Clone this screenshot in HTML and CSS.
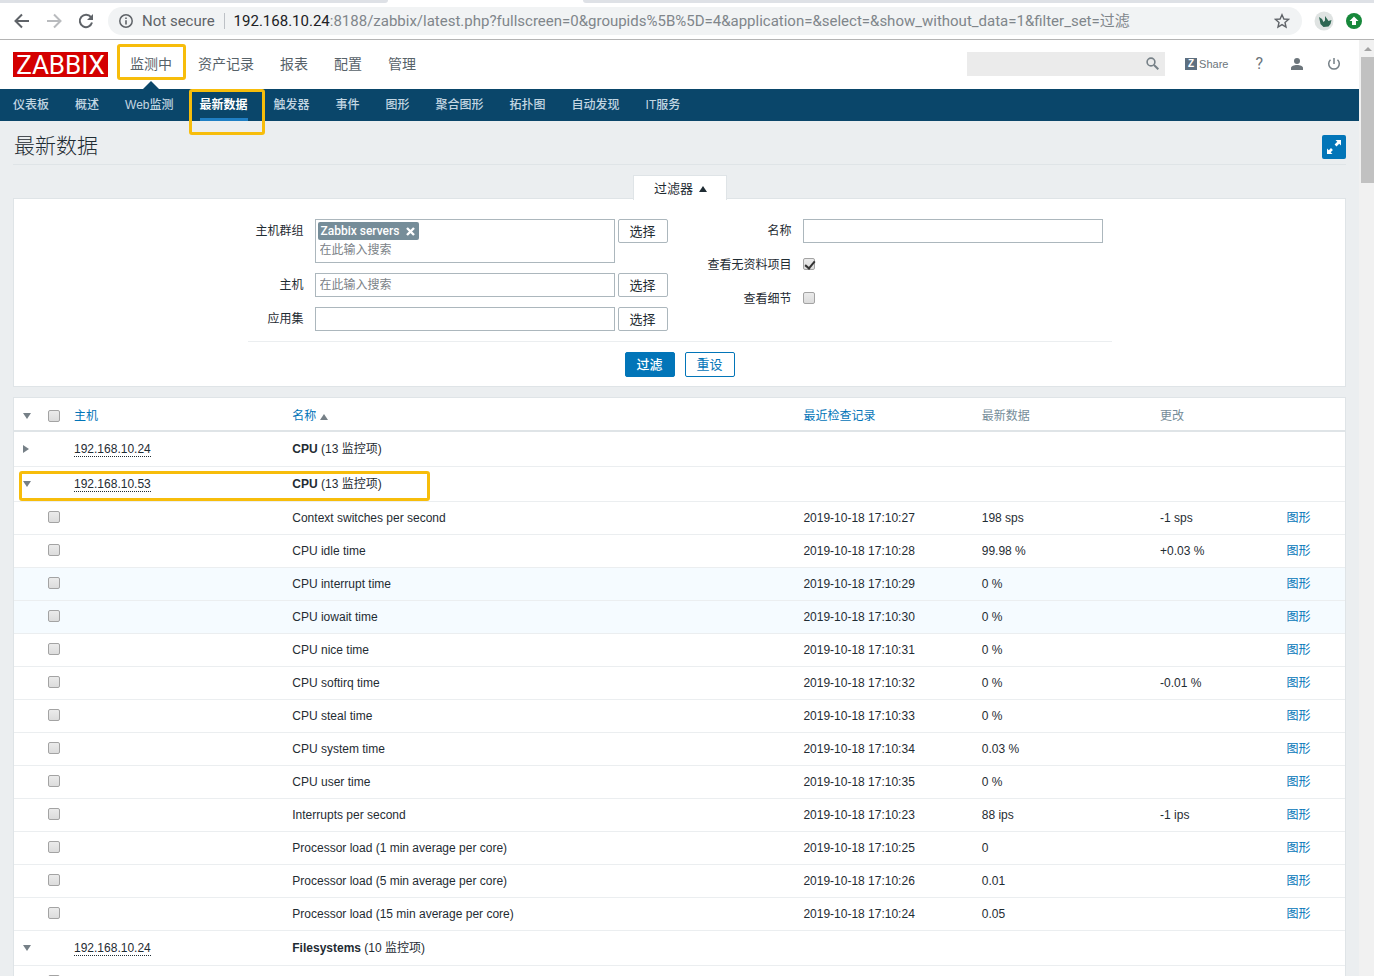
FILE: index.html
```html
<!DOCTYPE html>
<html lang="zh-CN">
<head>
<meta charset="utf-8">
<title>最新数据</title>
<link rel="stylesheet" href="styles.css">
</head>
<body>
<div class="browser">
  <div class="tabstrip"><span class="tab-inactive tab-left"></span><span class="tab-inactive tab-right"></span></div>
  <div class="toolbar">
    <button class="tool" aria-label="Back"><svg width="16" height="16" viewBox="0 0 16 16" fill="none" stroke="#5f6368" stroke-width="2"><path d="M15 8H2M8 1.5L1.5 8L8 14.5"/></svg></button>
    <button class="tool" aria-label="Forward"><svg width="16" height="16" viewBox="0 0 16 16" fill="none" stroke="#b9bbbe" stroke-width="2"><path d="M1 8h13M8 1.5L14.500 8L8 14.500"/></svg></button>
    <button class="tool" aria-label="Reload"><svg width="16" height="16" viewBox="0 0 16 16" fill="none" stroke="#5f6368" stroke-width="2"><path d="M13 4.200A6.200 6.200 0 1 0 14 9.600"/><path d="M15 1v6H9z" fill="#5f6368" stroke="none"/></svg></button>
    <div class="address">
      <svg width="14" height="14" viewBox="0 0 14 14" fill="none" stroke="#5f6368"><circle cx="7" cy="7" r="6.200" stroke-width="1.500"/><path d="M7 6.200V10.500M7 3.500V5" stroke-width="1.600"/></svg>
      <span class="insecure">Not secure</span>
      <span class="divider"></span>
      <span class="url"><span class="domain">192.168.10.24</span>:8188/zabbix/latest.php?fullscreen=0&amp;groupids%5B%5D=4&amp;application=&amp;select=&amp;show_without_data=1&amp;filter_set=过滤</span>
      <svg class="star" width="16" height="16" viewBox="0 0 16 16" fill="none" stroke="#5f6368" stroke-width="1.400"><path d="M8 1.800L9.900 6L14.500 6.400L11 9.500L12 14L8 11.600L4 14L5 9.500L1.500 6.400L6.100 6Z"/></svg>
    </div>
    <svg width="20" height="20" viewBox="0 0 20 20"><circle cx="10" cy="10" r="9.500" fill="#dfe3e2"/><path d="M5 6l3 2 1.500 3 1.500-1.500V5l2.500 3.500 1 1.500 3-1-1 4-2 2.500-5 .5-3-3z" fill="#2d6652"/></svg>
    <svg width="16" height="16" viewBox="0 0 16 16"><circle cx="8" cy="8" r="8" fill="#17883b"/><path d="M8 3.500L12.500 8H10v4H6V8H3.500z" fill="#fff"/></svg>
  </div>
</div>

<div class="viewport">
  <div class="page">
    <header class="header">
      <a class="logo" href="#">ZABBIX</a>
      <nav class="mainnav">
        <a class="current" href="#">监测中<span class="mark mark-main"></span></a>
        <a href="#">资产记录</a>
        <a href="#">报表</a>
        <a href="#">配置</a>
        <a href="#">管理</a>
      </nav>
      <div class="usernav">
        <div class="search">
          <input type="text" aria-label="搜索">
          <button aria-label="搜索"><svg width="13" height="13" viewBox="0 0 13 13" fill="none" stroke="#768087"><circle cx="5" cy="5" r="3.900" stroke-width="1.600"/><path d="M8 8L12.300 12.300" stroke-width="2"/></svg></button>
        </div>
        <a class="share" href="#"><span class="z">Z</span>Share</a>
        <a class="help" href="#">?</a>
        <a href="#" aria-label="用户"><svg width="12" height="12" viewBox="0 0 12 12" fill="#6c757b"><circle cx="6" cy="3" r="3"/><path d="M0 12V10C0 8 3 7 6 7s6 1 6 3v2z"/></svg></a>
        <a href="#" aria-label="退出"><svg width="14" height="14" viewBox="0 0 14 14" fill="none" stroke="#768087" stroke-width="1.500"><path d="M7 1V7M3.500 2.800A5.300 5.300 0 1 0 10.500 2.800"/></svg></a>
      </div>
    </header>
    <nav class="subnav">
      <a href="#">仪表板</a>
      <a href="#">概述</a>
      <a href="#">Web监测</a>
      <a class="current" href="#">最新数据<span class="mark mark-sub"></span></a>
      <a href="#">触发器</a>
      <a href="#">事件</a>
      <a href="#">图形</a>
      <a href="#">聚合图形</a>
      <a href="#">拓扑图</a>
      <a href="#">自动发现</a>
      <a href="#">IT服务</a>
    </nav>

    <main class="content">
      <div class="titlebar">
        <h1>最新数据</h1>
        <button class="fullscreen" aria-label="全屏"><svg width="16" height="16" viewBox="0 0 16 16" fill="#fff"><path d="M9.500 1H15V6.500L13.200 4.700L10.500 7.400L8.600 5.500L11.300 2.800z"/><path d="M6.500 15H1V9.500L2.800 11.300L5 9.100L6.900 11L4.700 13.200z"/></svg></button>
      </div>

      <button class="filter-tab">过滤器 <svg width="8" height="6" viewBox="0 0 8 6" fill="#1f2c33"><path d="M0 6L4 0L8 6z"/></svg></button>
      <form class="filter">
        <div class="filter-body">
          <div class="fields fields-left">
            <label for="groups">主机群组</label>
            <div class="control">
              <div class="multi">
                <span class="tag">Zabbix servers <button type="button" aria-label="移除"><svg width="9" height="9" viewBox="0 0 9 9" stroke="#fff" stroke-width="2.400"><path d="M1 1L8 8M8 1L1 8"/></svg></button></span>
                <input id="groups" type="text" placeholder="在此输入搜索">
              </div>
              <button type="button" class="select">选择</button>
            </div>
            <label for="hosts">主机</label>
            <div class="control"><input id="hosts" class="box" type="text" placeholder="在此输入搜索"><button type="button" class="select">选择</button></div>
            <label for="app">应用集</label>
            <div class="control"><input id="app" class="box" type="text"><button type="button" class="select">选择</button></div>
          </div>
          <div class="fields fields-right">
            <label for="name">名称</label>
            <input id="name" class="box" type="text">
            <label for="nodata">查看无资料项目</label>
            <div class="check-line"><input id="nodata" type="checkbox" checked></div>
            <label for="details">查看细节</label>
            <div class="check-line"><input id="details" type="checkbox"></div>
          </div>
        </div>
        <div class="actions">
          <button type="button" class="primary">过滤</button>
          <button type="button" class="secondary">重设</button>
        </div>
      </form>

      <table class="list">
        <colgroup><col class="c-arrow"><col class="c-check"><col class="c-host"><col class="c-name"><col class="c-data"><col class="c-data"><col class="c-change"><col></colgroup>
        <thead>
          <tr>
            <th><span class="arrow down"></span></th>
            <th><input type="checkbox" aria-label="全选"></th>
            <th><a href="#">主机</a></th>
            <th><a href="#">名称 <span class="arrow up"></span></a></th>
            <th><a href="#">最近检查记录</a></th>
            <th>最新数据</th>
            <th>更改</th>
            <th></th>
          </tr>
        </thead>
        <tbody>
          <tr class="group"><td><span class="arrow right"></span></td><td></td><td><a class="host" href="#">192.168.10.24</a></td><td colspan="5"><b>CPU</b> (13 监控项)</td></tr>
          <tr class="group"><td class="marked"><span class="arrow down"></span><span class="mark mark-row"></span></td><td></td><td><a class="host" href="#">192.168.10.53</a></td><td colspan="5"><b>CPU</b> (13 监控项)</td></tr>
          <tr><td></td><td><input type="checkbox" aria-label="选择"></td><td></td><td>Context switches per second</td><td>2019-10-18 17:10:27</td><td>198 sps</td><td>-1 sps</td><td><a href="#">图形</a></td></tr>
          <tr><td></td><td><input type="checkbox" aria-label="选择"></td><td></td><td>CPU idle time</td><td>2019-10-18 17:10:28</td><td>99.98 %</td><td>+0.03 %</td><td><a href="#">图形</a></td></tr>
          <tr class="tint"><td></td><td><input type="checkbox" aria-label="选择"></td><td></td><td>CPU interrupt time</td><td>2019-10-18 17:10:29</td><td>0 %</td><td></td><td><a href="#">图形</a></td></tr>
          <tr class="tint"><td></td><td><input type="checkbox" aria-label="选择"></td><td></td><td>CPU iowait time</td><td>2019-10-18 17:10:30</td><td>0 %</td><td></td><td><a href="#">图形</a></td></tr>
          <tr><td></td><td><input type="checkbox" aria-label="选择"></td><td></td><td>CPU nice time</td><td>2019-10-18 17:10:31</td><td>0 %</td><td></td><td><a href="#">图形</a></td></tr>
          <tr><td></td><td><input type="checkbox" aria-label="选择"></td><td></td><td>CPU softirq time</td><td>2019-10-18 17:10:32</td><td>0 %</td><td>-0.01 %</td><td><a href="#">图形</a></td></tr>
          <tr><td></td><td><input type="checkbox" aria-label="选择"></td><td></td><td>CPU steal time</td><td>2019-10-18 17:10:33</td><td>0 %</td><td></td><td><a href="#">图形</a></td></tr>
          <tr><td></td><td><input type="checkbox" aria-label="选择"></td><td></td><td>CPU system time</td><td>2019-10-18 17:10:34</td><td>0.03 %</td><td></td><td><a href="#">图形</a></td></tr>
          <tr><td></td><td><input type="checkbox" aria-label="选择"></td><td></td><td>CPU user time</td><td>2019-10-18 17:10:35</td><td>0 %</td><td></td><td><a href="#">图形</a></td></tr>
          <tr><td></td><td><input type="checkbox" aria-label="选择"></td><td></td><td>Interrupts per second</td><td>2019-10-18 17:10:23</td><td>88 ips</td><td>-1 ips</td><td><a href="#">图形</a></td></tr>
          <tr><td></td><td><input type="checkbox" aria-label="选择"></td><td></td><td>Processor load (1 min average per core)</td><td>2019-10-18 17:10:25</td><td>0</td><td></td><td><a href="#">图形</a></td></tr>
          <tr><td></td><td><input type="checkbox" aria-label="选择"></td><td></td><td>Processor load (5 min average per core)</td><td>2019-10-18 17:10:26</td><td>0.01</td><td></td><td><a href="#">图形</a></td></tr>
          <tr><td></td><td><input type="checkbox" aria-label="选择"></td><td></td><td>Processor load (15 min average per core)</td><td>2019-10-18 17:10:24</td><td>0.05</td><td></td><td><a href="#">图形</a></td></tr>
          <tr class="group"><td><span class="arrow down"></span></td><td></td><td><a class="host" href="#">192.168.10.24</a></td><td colspan="5"><b>Filesystems</b> (10 监控项)</td></tr>
          <tr><td></td><td><input type="checkbox" aria-label="选择"></td><td></td><td></td><td></td><td></td><td></td><td></td></tr>
        </tbody>
      </table>
    </main>
  </div>
  <div class="scrollbar"><span class="scroll-up"></span><span class="thumb"></span></div>
</div>
</body>
</html>
```
FILE: styles.css
```css
* { box-sizing: border-box; }
body {
  margin: 0;
  height: 100vh;
  display: flex;
  flex-direction: column;
  overflow: hidden;
  background: #ebeef0;
  color: #1f2c33;
  font: 12px/18px "Liberation Sans", "Noto Sans CJK SC", sans-serif;
}
a { color: #0275b8; text-decoration: none; }
button, input { font: inherit; color: inherit; margin: 0; padding: 0; border-radius: 0; }
button { background: none; border: 0; }
svg { display: block; flex: none; }

/* Browser bar */
.browser { flex: none; background: #fff; border-bottom: 1px solid #b4b4b4; }
.tabstrip { display: flex; justify-content: space-between; height: 3px; }
.tab-inactive { background: #dee1e6; }
.tab-left { width: 388px; border-bottom-right-radius: 4px; }
.tab-right { flex: 1; margin-left: 195px; border-bottom-left-radius: 4px; }
.toolbar { display: flex; align-items: center; gap: 12px; height: 36px; padding: 0 12px 0 14px; }
.tool { width: 16px; margin-right: 4px; }
.address {
  flex: 1;
  display: flex;
  align-items: center;
  height: 28px;
  margin-left: -2px;
  padding: 0 12px 0 11px;
  border-radius: 14px;
  background: #f1f3f4;
  color: #5f6368;
  font: 15px/20px Roboto, "Noto Sans CJK SC", sans-serif;
  white-space: nowrap;
}
.insecure { margin-left: 9px; }
.divider { width: 1px; height: 16px; margin: 0 9px; background: #bdc1c6; }
.url { flex: 1; color: #80868b; }
.domain { color: #202124; }

/* Page frame */
.viewport { flex: 1; min-height: 0; display: flex; }
.page { flex: 1; min-width: 0; overflow: hidden; }
.scrollbar { width: 15px; padding-left: 2px; background: #f1f1f1; display: flex; flex-direction: column; }
.scroll-up { height: 17px; flex: none; display: flex; align-items: center; justify-content: center; }
.scroll-up::before { content: ""; border: 4px solid transparent; border-top: 0; border-bottom: 4px solid #a3a3a3; }
.thumb { height: 126px; background: #c1c1c1; }

/* Header */
.header { display: flex; align-items: center; height: 49px; padding: 0 18px 0 13px; background: #fff; }
.logo { width: 95px; height: 25px; background: #d40000; color: #fff; font: 26px/26px Roboto, sans-serif; text-align: center; }
.mainnav { display: flex; gap: 26px; margin-left: 22px; font-size: 14px; line-height: 49px; }
.mainnav a { position: relative; color: #576269; }
.mainnav .current::after {
  content: "";
  position: absolute;
  left: 50%;
  bottom: 0;
  margin-left: -8px;
  border: 8px solid transparent;
  border-top: 0;
  border-bottom-color: #0a466a;
}
.usernav { display: flex; align-items: center; margin-left: auto; padding-bottom: 2px; gap: 24px; color: #768087; }
.usernav a { color: #6c757b; }
.search { display: flex; align-items: center; width: 198px; height: 24px; padding-right: 6px; background: #ebebeb; margin-right: -4px; }
.search input { flex: 1; min-width: 0; height: 24px; border: 0; background: none; }
.share { display: flex; align-items: center; gap: 2px; font: 11px/18px "Liberation Sans", sans-serif; margin-right: 3px; }
.z { width: 12px; height: 12px; background: #5d6f80; color: #fff; font: bold 10px/12px "Liberation Sans", sans-serif; text-align: center; }
.help { font: 16px/18px Roboto, sans-serif; margin-right: 4px; }
.subnav { display: flex; gap: 26px; height: 32px; padding: 0 13px; background: #0a466a; line-height: 33px; font-weight: 500; }
.subnav a { position: relative; height: 32px; color: #c3d6e2; }
.subnav .current { color: #fff; font-weight: bold; border-bottom: 3px solid #1f7fc4; }

/* Highlight frames */
.mark { position: absolute; border: 3px solid #f7bd0b; border-radius: 3px; z-index: 2; }
.mark-main { left: -13px; right: -14px; top: 4px; height: 36px; }
.mark-sub { left: -11px; right: -17px; top: 0; height: 46px; }
.mark-row { left: 5px; top: 4px; width: 411px; height: 30px; }

/* Title */
.content { padding: 0 13px; }
.titlebar { display: flex; align-items: center; justify-content: space-between; height: 44px; margin-bottom: 10px; padding-top: 8px; border-bottom: 1px solid #dfe4e7; }
h1 { margin: 0 0 2px 1px; font-size: 21px; font-weight: 300; line-height: 34px; }
.fullscreen { display: flex; align-items: center; justify-content: center; width: 24px; height: 24px; border-radius: 2px; background: #0275b8; }

/* Filter */
.filter-tab {
  position: relative;
  display: flex;
  align-items: center;
  justify-content: center;
  gap: 6px;
  width: 94px;
  height: 25px;
  margin: 0 auto -2px;
  padding: 1px 0 0 2px;
  border: 1px solid #dfe4e7;
  border-bottom: 0;
  background: #fff;
  font-size: 13px;
}
.filter { padding: 20px 0 9px; border: 1px solid #dfe4e7; background: #fff; margin-bottom: 10px; }
.filter-body { display: flex; gap: 40px; width: 864px; margin: 0 auto; padding-bottom: 10px; border-bottom: 1px solid #ebeef0; }
.fields { display: grid; column-gap: 11px; row-gap: 10px; align-content: start; }
.fields label { line-height: 24px; text-align: right; white-space: nowrap; }
.fields-left { grid-template-columns: 56px 353px; }
.fields-right { grid-template-columns: 84px 300px; }
.control { display: flex; align-items: flex-start; gap: 3px; }
.multi, .box { border: 1px solid #acb7bd; background: #fff; }
.multi { width: 300px; padding: 2px; display: flex; flex-direction: column; align-items: flex-start; }
.multi input { width: 100%; height: 20px; padding: 0 2px; border: 0; }
.box { width: 300px; height: 24px; padding: 0 4px; }
input::placeholder { color: #7b8287; opacity: 1; }
.tag { display: flex; align-items: center; gap: 7px; height: 18px; padding: 0 4px 0 3px; border-radius: 2px; background: #768d99; color: #fff; font-family: Roboto, sans-serif; font-weight: 500; }
.select { width: 50px; height: 24px; padding-top: 1px; border: 1px solid #acb7bd; border-radius: 2px; font-size: 13px; }
.check-line { display: flex; align-items: center; height: 24px; padding-bottom: 2px; }
.actions { display: flex; justify-content: center; gap: 10px; padding-top: 10px; }
.actions button { width: 50px; height: 25px; border: 1px solid #0275b8; border-radius: 2px; font-size: 13px; }
.actions .primary { background: #0275b8; color: #fff; font-weight: 500; }
.actions .secondary { background: #fff; color: #0275b8; }
input[type="checkbox"] {
  appearance: none;
  display: block;
  width: 12px;
  height: 12px;
  border: 1px solid #a3a3a3;
  border-radius: 2px;
  background: linear-gradient(#ebebeb, #dcdcdc);
}
input[type="checkbox"]:checked::before {
  content: "";
  display: block;
  width: 4px;
  height: 8px;
  margin-left: 3px;
  border: solid #333;
  border-width: 0 2px 2px 0;
  transform: rotate(40deg);
}

/* Data table */
.list { width: 100%; table-layout: fixed; border-spacing: 0; border: 1px solid #dfe4e7; background: #fff; }
.c-arrow { width: 29px; }
.c-check { width: 26px; }
.c-host { width: 16.4%; }
.c-name { width: 38.4%; }
.c-data { width: 13.4%; }
.c-change { width: 9.5%; }
.list th, .list td { height: 33px; padding: 0 5px; border-bottom: 1px solid #ebeef0; text-align: left; white-space: nowrap; }
.list th { height: 34px; padding-top: 4px; border-bottom: 2px solid #dfe4e7; color: #768d99; font-weight: normal; }
.list .group td { height: 35px; }
.list td input { margin-bottom: 2px; }
.list .tint td { background: #f5fbff; }
.marked { position: relative; }
.host { color: #1f2c33; border-bottom: 1px dotted #1f2c33; }
.arrow { display: inline-block; border: 4px solid transparent; }
td > .arrow, th > .arrow { display: block; width: 8px; margin-left: 4px; }
.arrow.down { border-top: 6px solid #768087; border-bottom: 0; }
.arrow.up { border-bottom: 6px solid #768087; border-top: 0; }
.arrow.right { border-left: 6px solid #768087; border-right: 0; }
```
